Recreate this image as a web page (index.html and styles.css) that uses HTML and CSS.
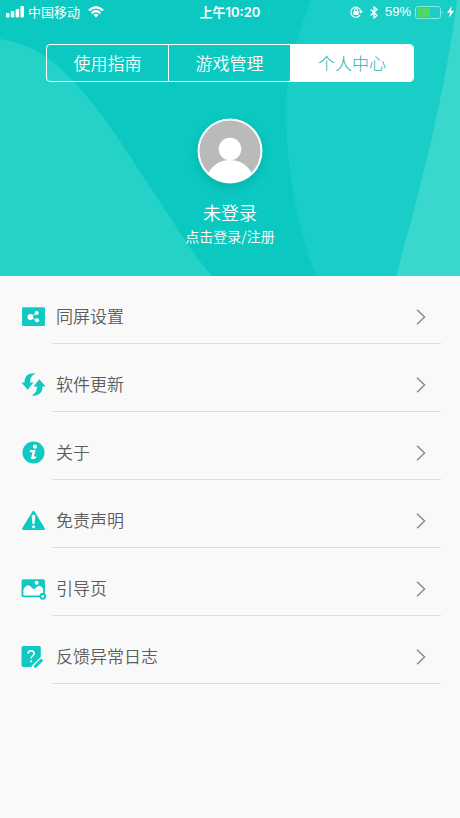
FILE: index.html
```html
<!DOCTYPE html>
<html lang="zh-CN">
<head>
<meta charset="utf-8">
<meta name="viewport" content="width=device-width, initial-scale=1">
<title>个人中心</title>
<link rel="stylesheet" href="styles.css">
</head>
<body>
<header class="hero">
  <svg class="hero-bg" viewBox="0 0 460 276" preserveAspectRatio="none" aria-hidden="true">
    <path fill="#25d2c8" d="M0 39C32 44 54 60 76 84C104 114 125 149 150 187C173 221 192 254 212 276H0Z"/>
    <path fill="#18cec6" d="M311 0C296 38 286 70 286 110C286 172 299 232 316 276H460V0Z"/>
    <path fill="#39d7cd" d="M460 0H457C449 60 436 135 396 276H460Z"/>
  </svg>
  <div class="status">
    <div class="status-left">
      <svg width="18" height="12" viewBox="0 0 18 12" fill="#fff" aria-hidden="true"><rect y="7" width="3.5" height="4.5" rx="1"/><rect x="4.8" y="5" width="3.5" height="6.5" rx="1"/><rect x="9.6" y="3" width="3.5" height="8.5" rx="1"/><rect x="14.4" y="0" width="3.5" height="11.5" rx="1"/></svg>
      <span>中国移动</span>
      <svg class="wifi" width="16" height="12" viewBox="0 0 16 12" fill="none" stroke="#fff" stroke-width="2.2" aria-hidden="true"><path d="M.9 4.5Q8-2 15.1 4.5M3.5 7.2Q8 3.2 12.5 7.2"/><path d="M5.4 8.8Q8 6.8 10.6 8.8L8 11.6Z" fill="#fff" stroke="none"/></svg>
    </div>
    <span class="clock">上午10:20</span>
    <div class="status-right">
      <svg width="13" height="12" viewBox="0 0 13 12" fill="none" stroke="#fff" stroke-width="1.2" aria-hidden="true"><path d="M10 9.2A5 5 0 1 1 10.8 5"/><path d="M8.8 5H13L10.9 7.8Z" fill="#fff" stroke="none"/><rect x="3.4" y="5.2" width="5.2" height="3.8" rx=".5" fill="#fff" stroke="none"/><path d="M4.5 5.4V4.2a1.5 1.5 0 0 1 3 0V5.4"/></svg>
      <svg class="bt" width="8" height="13" viewBox="0 0 8 13" fill="none" stroke="#fff" stroke-width="1.3" aria-hidden="true"><path d="M.6 3.6L7 9.4L4 12V1L7 3.6L.6 9.4"/></svg>
      <span>59%</span>
      <svg class="battery" width="28" height="13" viewBox="0 0 28 13" aria-hidden="true"><rect x=".5" y=".5" width="25" height="12" rx="2.5" fill="none" stroke="#8be7e1"/><rect x="2" y="2" width="13" height="9" rx="1" fill="#4cd964"/><path d="M27 4.5Q28.4 6.5 27 8.5Z" fill="#8be7e1"/></svg>
      <svg class="bolt" width="7" height="12" viewBox="0 0 7 12" aria-hidden="true"><path d="M4.8 0L0 6.8H3L2 12L7 4.8H4Z" fill="#fff"/></svg>
    </div>
  </div>
  <nav class="tabs">
    <button type="button">使用指南</button>
    <button type="button">游戏管理</button>
    <button type="button" class="active" aria-current="page">个人中心</button>
  </nav>
  <a class="profile" href="#login">
    <svg class="avatar" width="66" height="66" viewBox="0 0 66 66" aria-hidden="true"><defs><clipPath id="face"><circle cx="33" cy="33" r="31.5"/></clipPath></defs><circle cx="33" cy="33" r="32.5" fill="#fff"/><circle cx="33" cy="33" r="30.5" fill="#bababa"/><g fill="#fff" clip-path="url(#face)"><circle cx="33" cy="31" r="11.3"/><path d="M10 57Q18 42 33 42T56 57V66H10Z"/></g></svg>
    <span class="name">未登录</span>
    <span class="hint">点击登录/注册</span>
  </a>
</header>
<main class="menu">
  <a class="row" href="#screen">
    <svg class="icon" viewBox="0 0 24 24" aria-hidden="true"><rect x="1" y="3" width="22" height="18" rx="1" fill="#10c9c0"/><path d="M15 8.6L9 12.5L15.4 15.8" stroke="#fff" stroke-width=".8" fill="none"/><g fill="#fff"><circle cx="9" cy="12.5" r="2.8"/><circle cx="15" cy="8.6" r="1.9"/><circle cx="15.4" cy="15.6" r="2"/></g></svg>
    <span class="label">同屏设置</span>
    <svg class="arrow" viewBox="0 0 10 16" aria-hidden="true"><path d="M1 .7L8.6 8L1 15.3"/></svg>
  </a>
  <a class="row" href="#update">
    <svg class="icon" viewBox="0 0 24 24" fill="#10c9c0" aria-hidden="true"><path d="M14 1.4C6.5.6 3.2 4.5 3.4 10H.4L6.4 17L12 10H8.8C8.6 6.2 10 3.2 14 1.4Z"/><path d="M10 22.6C17.5 23.4 20.8 19.5 20.6 14H23.6L17.6 7L12 14H15.2C15.4 17.8 14 20.8 10 22.6Z"/></svg>
    <span class="label">软件更新</span>
    <svg class="arrow" viewBox="0 0 10 16" aria-hidden="true"><path d="M1 .7L8.6 8L1 15.3"/></svg>
  </a>
  <a class="row" href="#about">
    <svg class="icon" viewBox="0 0 24 24" aria-hidden="true"><circle cx="12" cy="12" r="10.6" fill="#10c9c0"/><circle cx="13.4" cy="6.4" r="2" fill="#fff"/><path d="M8.6 10.6H12.6L10.8 17.2Q12.2 17.6 14.2 16.2" fill="none" stroke="#fff" stroke-width="2.2"/></svg>
    <span class="label">关于</span>
    <svg class="arrow" viewBox="0 0 10 16" aria-hidden="true"><path d="M1 .7L8.6 8L1 15.3"/></svg>
  </a>
  <a class="row" href="#disclaimer">
    <svg class="icon" viewBox="0 0 24 24" aria-hidden="true"><path d="M12 4L21.8 20H2.2Z" fill="#10c9c0" stroke="#10c9c0" stroke-width="2.4" stroke-linejoin="round"/><path d="M10.2 7.5Q12 5.5 13.8 7.5L12.9 15.3H11.1Z" fill="#fff"/><circle cx="12" cy="18" r="1.5" fill="#fff"/></svg>
    <span class="label">免责声明</span>
    <svg class="arrow" viewBox="0 0 10 16" aria-hidden="true"><path d="M1 .7L8.6 8L1 15.3"/></svg>
  </a>
  <a class="row" href="#guide">
    <svg class="icon" viewBox="0 0 24 24" aria-hidden="true"><rect x=".5" y="3" width="22.5" height="17.5" rx="2" fill="#10c9c0"/><path d="M2.3 13Q5 8.5 7.5 9Q9.5 9.6 12 13Q14.5 11 17 9.4Q19 8.8 21.2 12V16Q18 16.2 17.6 18.8H2.3Z" fill="#fff"/><circle cx="15" cy="6.4" r="1.9" fill="#fff"/><circle cx="21" cy="19.6" r="2.2" fill="#f9f9f9" stroke="#10c9c0" stroke-width="1.8"/></svg>
    <span class="label">引导页</span>
    <svg class="arrow" viewBox="0 0 10 16" aria-hidden="true"><path d="M1 .7L8.6 8L1 15.3"/></svg>
  </a>
  <a class="row" href="#feedback">
    <svg class="icon" viewBox="0 0 24 24" aria-hidden="true"><path d="M2 2H17.5Q19 2 19 3.5V13L10.5 22H2Q.5 22 .5 20.5V3.5Q.5 2 2 2Z" fill="#10c9c0"/><path d="M6.8 9.2Q6.8 6.4 9.7 6.4T12.6 9.2C12.6 11.4 9.7 11.2 9.7 14" fill="none" stroke="#fff" stroke-width="1.5"/><circle cx="9.7" cy="16.6" r="1.1" fill="#fff"/><path d="M11.5 23L20.5 14" stroke="#f9f9f9" stroke-width="4.6"/><path d="M13 22.3L20.3 15" stroke="#10c9c0" stroke-width="2.8"/></svg>
    <span class="label">反馈异常日志</span>
    <svg class="arrow" viewBox="0 0 10 16" aria-hidden="true"><path d="M1 .7L8.6 8L1 15.3"/></svg>
  </a>
</main>
</body>
</html>
```
FILE: styles.css
```css
* { box-sizing: border-box; }
body {
  margin: 0;
  min-height: 100vh;
  background: #f9f9f9;
  font-family: "Noto Sans CJK SC", sans-serif;
  color: #5c5c5c;
}
a { color: inherit; text-decoration: none; }
svg { flex: none; }
.hero {
  position: relative;
  padding-bottom: 28px;
  background: #0bc9c0;
  color: #fff;
}
.hero-bg { position: absolute; inset: 0; width: 100%; height: 100%; }
.status {
  position: relative;
  display: grid;
  grid-template-columns: 1fr auto 1fr;
  align-items: center;
  height: 24px;
  padding: 0 6px;
  font-size: 13px;
  line-height: 24px;
}
.status-left, .status-right { display: flex; align-items: center; gap: 4px; }
.status-right { justify-content: flex-end; font-family: "Liberation Sans", sans-serif; }
.wifi { margin-left: 4px; }
.bt { margin: 0 3px; }
.clock { font-family: Inter, "Noto Sans CJK SC", sans-serif; font-weight: 600; }
.tabs {
  position: relative;
  display: grid;
  grid-template-columns: repeat(3, 1fr);
  width: 80%;
  height: 38px;
  margin: 20px auto 0;
  border: 1px solid #fff;
  border-radius: 4px;
  overflow: hidden;
}
.tabs button {
  padding: 0 0 2px;
  border: 0;
  border-right: 1px solid #fff;
  background: none;
  color: #fff;
  font: 350 17px "Noto Sans CJK SC", sans-serif;
}
.tabs .active { border: 0; background: #fff; color: #22b5b5; font-weight: 300; }
.profile {
  position: relative;
  display: flex;
  flex-direction: column;
  align-items: center;
  width: max-content;
  margin: 36px auto 0;
}
.avatar { border-radius: 50%; box-shadow: 0 4px 8px rgb(0 90 90 / 20%); }
.name { margin-top: 16px; font-size: 18px; font-weight: 350; line-height: 24px; }
.hint { font-size: 14px; font-weight: 350; line-height: 24px; }
.row {
  display: flex;
  align-items: center;
  height: 68px;
  padding: 13px 34px 0 21px;
  background: linear-gradient(#dedede, #dedede) 52px 100% / calc(100% - 71px) 1px no-repeat;
}
.icon { width: 25px; height: 25px; }
.label { flex: 1; margin-left: 10px; padding-bottom: 2px; font-size: 17px; font-weight: 350; line-height: 24px; }
.arrow { width: 10px; height: 16px; fill: none; stroke: #888; stroke-width: 1.4; }
```
